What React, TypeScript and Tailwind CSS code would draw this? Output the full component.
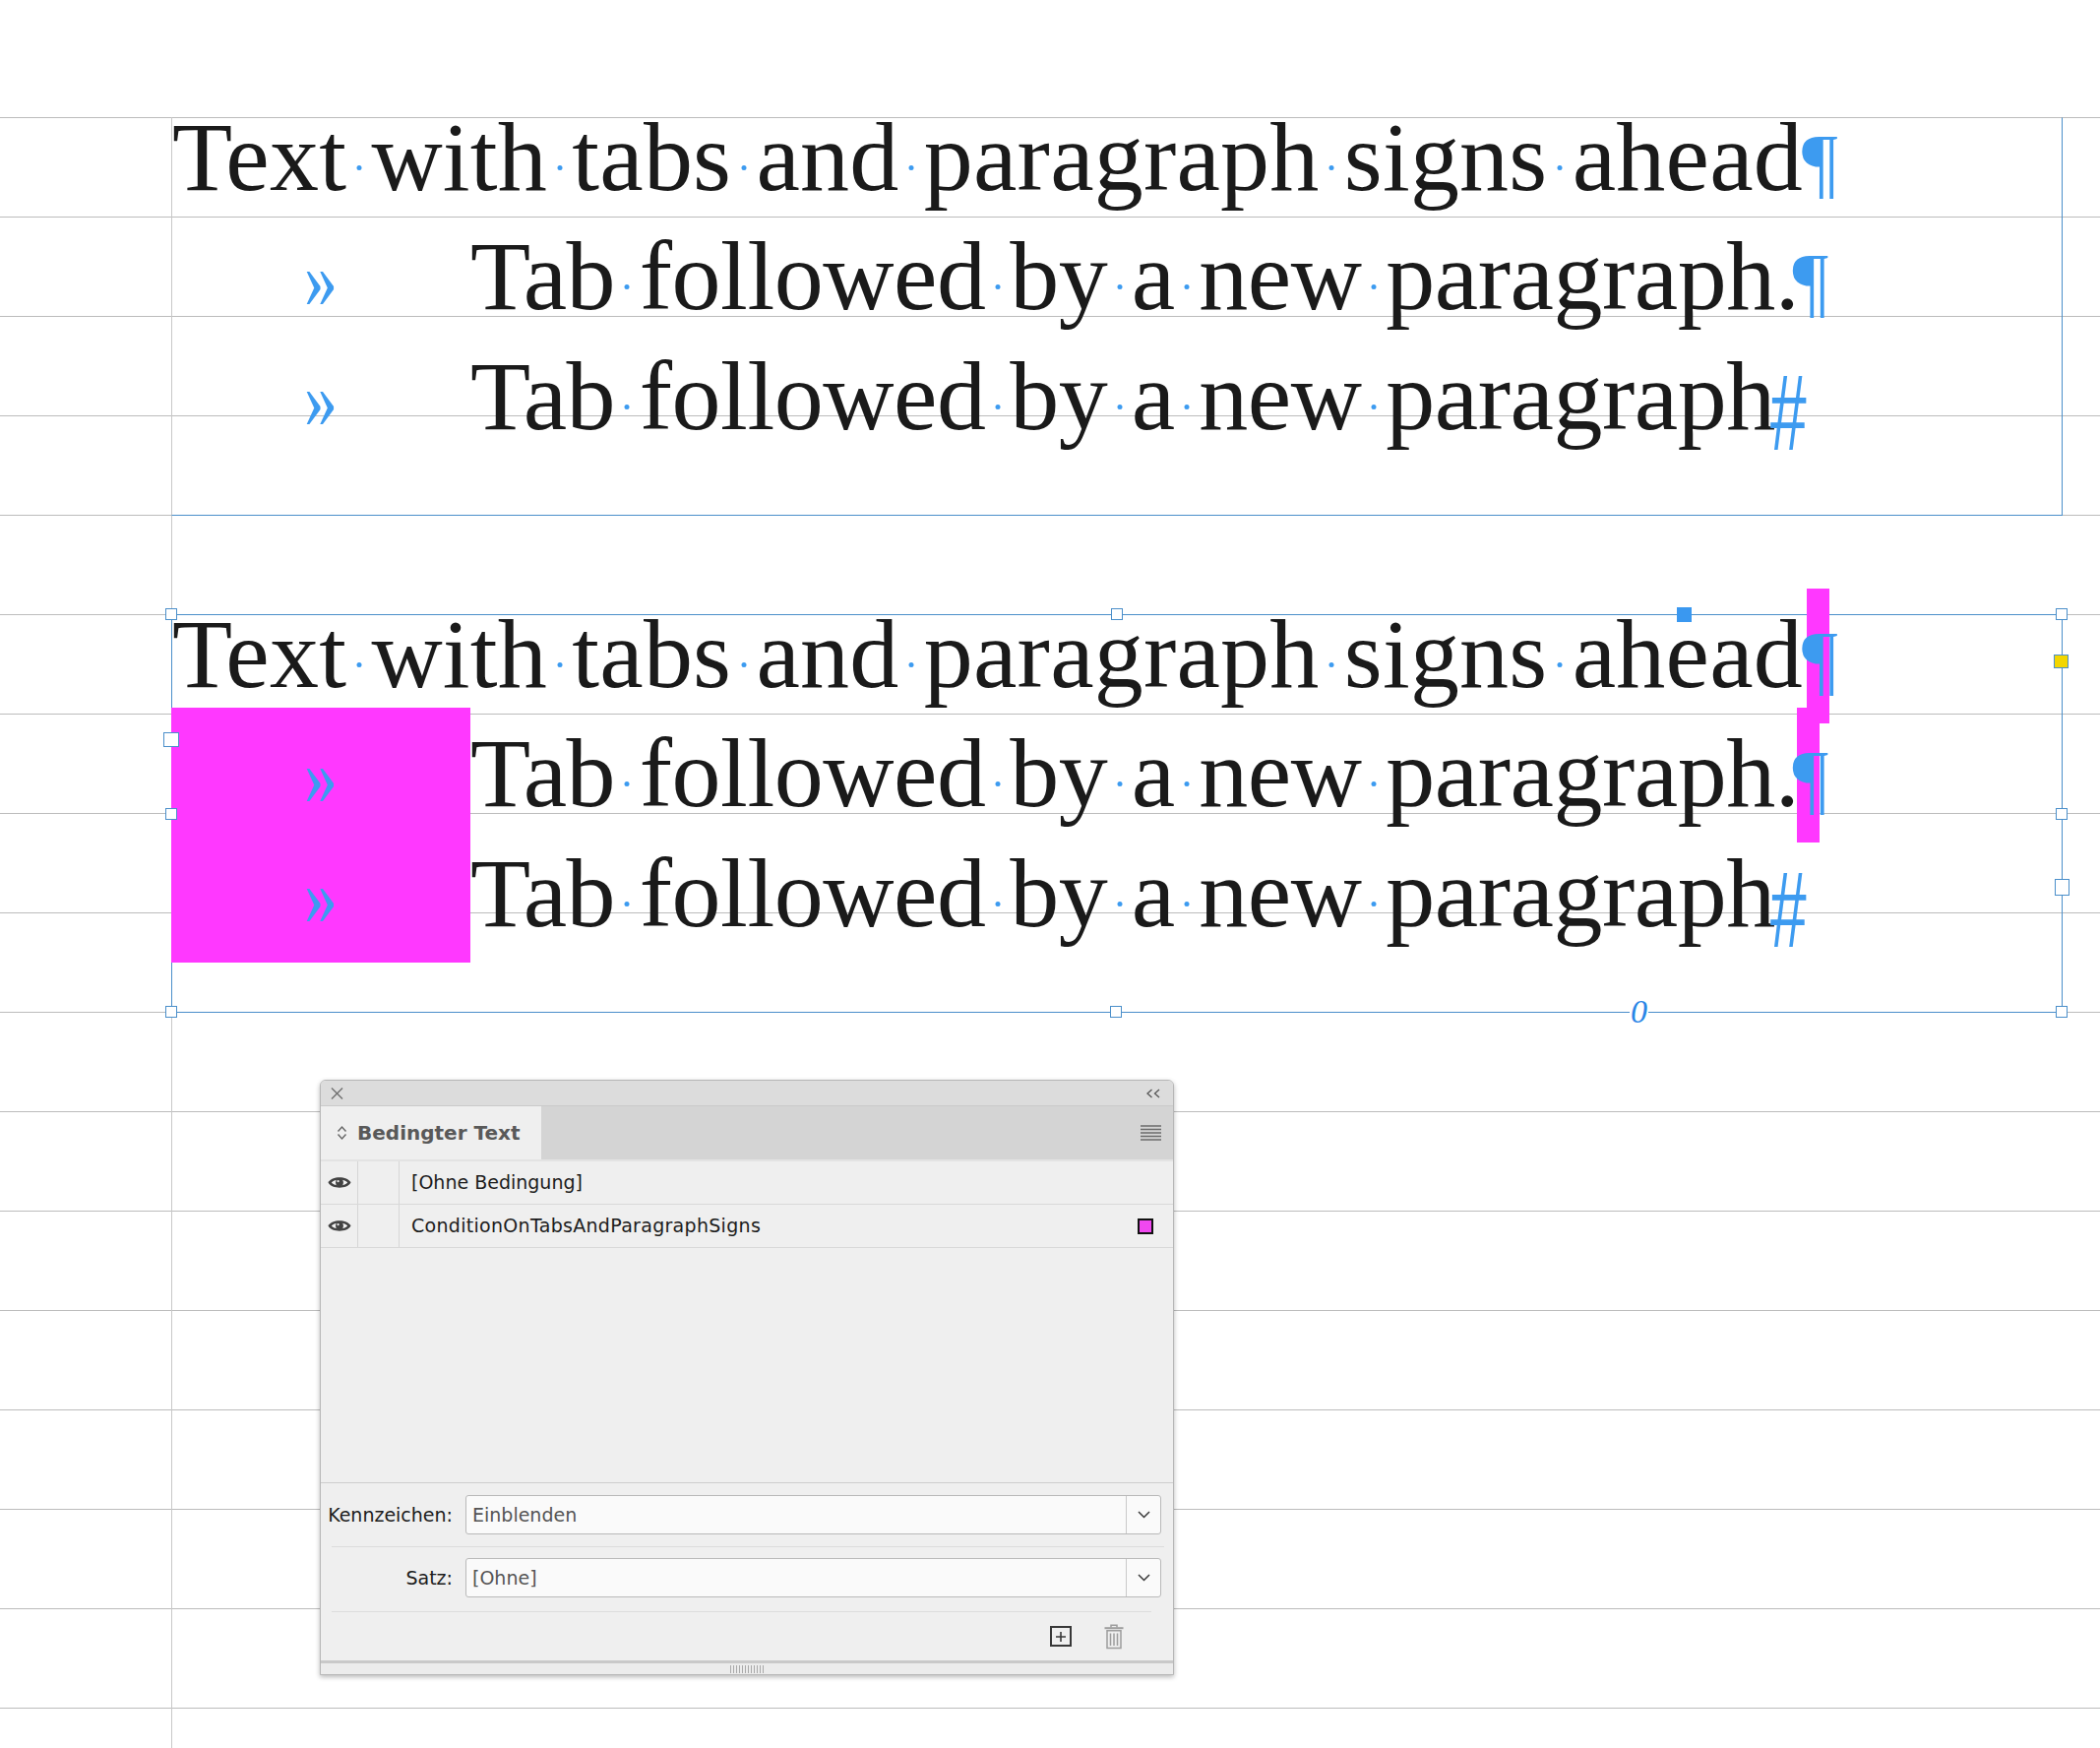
import React from "react";

function Sp() {
  return (
    <span className="relative">
      {" "}
      <span className="absolute left-1/2 top-[64px] h-[5px] w-[5px] -translate-x-1/2 rounded-full bg-[#3d9bf0]" />
    </span>
  );
}

function Words({ text }: { text: string }) {
  const parts = text.split(" ");
  return (
    <>
      {parts.map((w, i) => (
        <React.Fragment key={i}>
          {i > 0 && <Sp />}
          {w}
        </React.Fragment>
      ))}
    </>
  );
}

function Tab({ hl }: { hl: boolean }) {
  return (
    <span className="relative inline-block h-0 w-[303px] align-baseline">
      {hl && <span className="absolute left-[-1px] right-0 top-[-100px] h-[137px] bg-[#ff38ff]" />}
      <span className="absolute left-[134px] top-[-75px] origin-left scale-x-[0.78] text-[87px] leading-[87px] tracking-normal text-[#3d9bf0]">
        »
      </span>
    </span>
  );
}

function Pilcrow({ hl, cls }: { hl: boolean; cls: string }) {
  return (
    <span className={"relative inline-block h-0 w-[23px] align-baseline " + cls}>
      {hl && <span className="absolute left-0 right-0 top-[-100px] h-[137px] bg-[#ff38ff]" />}
      <span className="absolute left-[-5px] top-[-68px] text-[81px] leading-[81px] tracking-normal text-[#3d9bf0]">¶</span>
    </span>
  );
}

function EndMark() {
  return (
    <span className="relative inline-block h-0 w-0 align-baseline">
      <span className="absolute left-[-6px] top-[-72px] origin-left scale-x-[0.6] font-['Liberation_Sans',sans-serif] text-[110px] italic leading-[110px] tracking-normal text-[#3d9bf0]">
        #
      </span>
    </span>
  );
}

function FrameText({ hl }: { hl: boolean }) {
  return (
    <div className="-mt-[21.5px] whitespace-nowrap font-['Liberation_Serif',serif] text-[100px] leading-[121.5px] text-[#1a1a1a]">
      <div className="tracking-[0.22px]">
        <Words text="Text with tabs and paragraph signs ahead" />
        <Pilcrow hl={hl} cls="ml-[4px]" />
      </div>
      <div className="tracking-[-0.45px]">
        <Tab hl={hl} />
        <Words text="Tab followed by a new paragraph." />
        <Pilcrow hl={hl} cls="ml-[-2px]" />
      </div>
      <div className="tracking-[-0.45px]">
        <Tab hl={hl} />
        <Words text="Tab followed by a new paragraph" />
        <EndMark />
      </div>
    </div>
  );
}

function Handle({ cls }: { cls: string }) {
  return <div className={"absolute border border-[#4b8fca] " + cls} />;
}

function EyeIcon() {
  return (
    <svg width="24" height="15" viewBox="0 0 24 15">
      <path d="M0.5 7.5 C4.2 0.6 19.8 0.6 23.5 7.5 C19.8 14.4 4.2 14.4 0.5 7.5Z" fill="#434343" />
      <path d="M3.8 7.5 C6.9 3.6 17.1 3.6 20.2 7.5 C17.1 11.4 6.9 11.4 3.8 7.5Z" fill="#f2f2f2" />
      <circle cx="12" cy="7.5" r="3.9" fill="#434343" />
      <circle cx="10.6" cy="6.2" r="1.1" fill="#f2f2f2" />
    </svg>
  );
}

function Chevron() {
  return (
    <svg width="13" height="8" viewBox="0 0 13 8" fill="none" stroke="#3a3a3a" strokeWidth="1.5">
      <path d="M1 1 L6.5 6.5 L12 1" />
    </svg>
  );
}

function Dropdown({ value }: { value: string }) {
  return (
    <div className="flex h-[40px] flex-1 rounded-[3px] border border-[#b9b9b9] bg-[#fafafa]">
      <div className="flex flex-1 items-center pl-[6px] text-[#555555]">{value}</div>
      <div className="flex w-[35px] items-center justify-center border-l border-[#c9c9c9]">
        <Chevron />
      </div>
    </div>
  );
}

function Panel() {
  return (
    <div className="absolute left-[325px] top-[1097px] flex h-[605px] w-[868px] flex-col overflow-hidden rounded-t-[6px] border border-[#b7b7b7] bg-[#efefef] font-['DejaVu_Sans',sans-serif] text-[19px] text-[#1c1c1c] shadow-[0_2px_5px_rgba(0,0,0,0.28)]">
      {/* title bar */}
      <div className="flex h-[26px] shrink-0 items-center justify-between border-b border-[#cacaca] bg-[#dcdcdc] pl-[10px] pr-[12px]">
        <svg width="13" height="12" viewBox="0 0 13 12" fill="none" stroke="#6f6f6f" strokeWidth="1.4">
          <path d="M1 0.5 L12 11.5 M12 0.5 L1 11.5" />
        </svg>
        <svg width="16" height="10" viewBox="0 0 16 10" fill="none" stroke="#555555" strokeWidth="1.3">
          <path d="M6.5 1 L2 5 L6.5 9 M14 1 L9.5 5 L14 9" />
        </svg>
      </div>
      {/* tab row */}
      <div className="flex h-[56px] shrink-0 items-stretch justify-between border-b-2 border-[#e3e3e3] bg-[#d4d4d4]">
        <div className="flex w-[224px] items-center gap-[10px] bg-[#efefef] pl-[16px]">
          <svg width="11" height="16" viewBox="0 0 11 16" fill="none" stroke="#666666" strokeWidth="1.4">
            <path d="M1.5 6.5 L5.5 2 L9.5 6.5 M1.5 9.5 L5.5 14 L9.5 9.5" />
          </svg>
          <span className="text-[20px] font-bold text-[#595959]">Bedingter Text</span>
        </div>
        <div className="flex items-center pr-[12px]">
          <svg width="21" height="16" viewBox="0 0 21 16" fill="none" stroke="#6b6b6b" strokeWidth="1.5">
            <path d="M0 1 H21 M0 4.5 H21 M0 8 H21 M0 11.5 H21 M0 15 H21" />
          </svg>
        </div>
      </div>
      {/* list */}
      <div className="flex h-[327px] shrink-0 flex-col border-b border-[#cdcdcd] bg-[#efefef]">
        <div className="flex h-[44px] shrink-0 border-b border-[#d9d9d9]">
          <div className="flex w-[38px] items-center justify-center border-r border-[#d6d6d6]">
            <EyeIcon />
          </div>
          <div className="w-[42px] border-r border-[#d6d6d6]" />
          <div className="flex flex-1 items-center pl-[12px]">[Ohne Bedingung]</div>
        </div>
        <div className="flex h-[44px] shrink-0 border-b border-[#d9d9d9]">
          <div className="flex w-[38px] items-center justify-center border-r border-[#d6d6d6]">
            <EyeIcon />
          </div>
          <div className="w-[42px] border-r border-[#d6d6d6]" />
          <div className="flex flex-1 items-center justify-between pl-[12px] pr-[20px]">
            <span className="tracking-[0.3px]">ConditionOnTabsAndParagraphSigns</span>
            <div className="h-[16px] w-[16px] border-2 border-[#111111] bg-[#f148f0]" />
          </div>
        </div>
      </div>
      {/* controls */}
      <div className="flex flex-1 flex-col pt-[12px]">
        <div className="flex items-center gap-[13px] pr-[12px]">
          <div className="w-[134px] text-right">Kennzeichen:</div>
          <Dropdown value="Einblenden" />
        </div>
        <div className="ml-[11px] mr-[9px] mt-[12px] h-px bg-[#dcdcdc]" />
        <div className="mt-[11px] flex items-center gap-[13px] pr-[12px]">
          <div className="w-[134px] text-right">Satz:</div>
          <Dropdown value="[Ohne]" />
        </div>
        <div className="ml-[11px] mr-[22px] mt-[14px] h-px bg-[#dcdcdc]" />
        <div className="flex h-[49px] items-center justify-end gap-[32px] pr-[49px]">
          <div className="relative flex h-[21px] w-[22px] items-center justify-center border-2 border-[#383838]">
            <svg width="10" height="10" viewBox="0 0 10 10" stroke="#383838" strokeWidth="1.6">
              <path d="M5 0 V10 M0 5 H10" />
            </svg>
          </div>
          <svg width="22" height="26" viewBox="0 0 22 26" fill="none" stroke="#9d9d9d" strokeWidth="1.5">
            <path d="M8 3.5 V1.2 H14 V3.5" />
            <path d="M1.5 4.2 H20.5" strokeWidth="2" />
            <path d="M4 6.8 H18 V24.6 H4 Z" />
            <path d="M7.5 9.5 V22 M11 9.5 V22 M14.5 9.5 V22" />
          </svg>
        </div>
        <div className="flex h-[14px] items-center justify-center border-t-[3px] border-[#c9c9c9] bg-[#ececec]">
          <svg width="37" height="8" viewBox="0 0 37 8" stroke="#a9a9a9" strokeWidth="1">
            <path d="M1.5 0 V8 M4.5 0 V8 M7.5 0 V8 M10.5 0 V8 M13.5 0 V8 M16.5 0 V8 M19.5 0 V8 M22.5 0 V8 M25.5 0 V8 M28.5 0 V8 M31.5 0 V8 M34.5 0 V8" />
          </svg>
        </div>
      </div>
    </div>
  );
}

export default function App() {
  const grid = Array.from({ length: 17 });
  return (
    <div className="relative h-[1776px] w-[2134px] overflow-hidden bg-white">
      {/* baseline grid */}
      <div className="absolute inset-x-0 top-[119px] flex flex-col">
        {grid.map((_, i) => (
          <div key={i} className="h-[101px] shrink-0 border-t border-[#bcbcbc]" />
        ))}
      </div>
      {/* vertical guide */}
      <div className="absolute bottom-0 left-[174px] top-[119px] w-px bg-[#c8c8c8]" />

      {/* frame 1 (not selected) */}
      <div className="absolute left-[174px] top-[119px] h-[405px] w-[1922px] border border-transparent border-b-[#4b8fca] border-r-[#4b8fca]">
        <FrameText hl={false} />
      </div>

      {/* frame 2 (selected) */}
      <div className="absolute left-[174px] top-[624px] h-[405px] w-[1922px] border border-[#4b8fca]">
        <FrameText hl={true} />
        <Handle cls="left-[-7px] top-[-7px] h-[12px] w-[12px] bg-white" />
        <Handle cls="left-[954px] top-[-7px] h-[12px] w-[12px] bg-white" />
        <Handle cls="left-[1914px] top-[-7px] h-[12px] w-[12px] bg-white" />
        <Handle cls="left-[-7px] top-[196px] h-[12px] w-[12px] bg-white" />
        <Handle cls="left-[1914px] top-[196px] h-[12px] w-[12px] bg-white" />
        <Handle cls="left-[-7px] top-[397px] h-[12px] w-[12px] bg-white" />
        <Handle cls="left-[953px] top-[397px] h-[12px] w-[12px] bg-white" />
        <Handle cls="left-[1914px] top-[397px] h-[12px] w-[12px] bg-white" />
        <Handle cls="left-[-9px] top-[119px] h-[15px] w-[16px] bg-white" />
        <Handle cls="left-[1913px] top-[268px] h-[17px] w-[15px] bg-white" />
        <Handle cls="left-[1912px] top-[40px] h-[14px] w-[15px] bg-[#f3d600]" />
        <div className="absolute left-[1529px] top-[-8px] h-[15px] w-[15px] bg-[#3a98f0]" />
        <span className="absolute left-[1481px] top-[386px] bg-white px-[1px] font-['Liberation_Serif',serif] text-[34px] italic leading-[34px] text-[#2a86e6]">
          0
        </span>
      </div>

      <Panel />
    </div>
  );
}
